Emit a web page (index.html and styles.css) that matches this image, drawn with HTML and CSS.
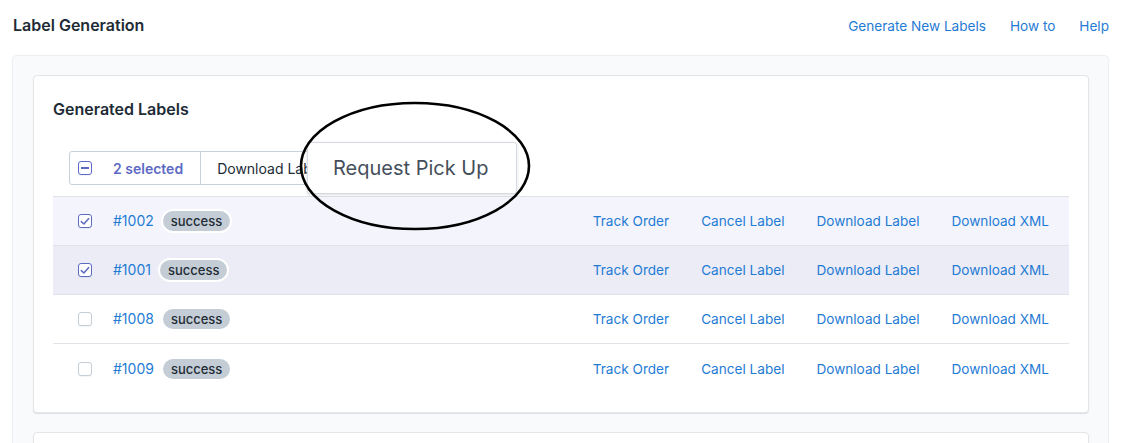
FILE: index.html
```html
<!DOCTYPE html>
<html>
<head>
<meta charset="utf-8">
<link rel="stylesheet" href="styles.css">
</head>
<body>
<header class="top">
  <h1 class="title">Label Generation</h1>
  <nav class="links">
    <a class="link">Generate New Labels</a>
    <a class="link">How to</a>
    <a class="link">Help</a>
  </nav>
</header>
<main class="wrap">
  <section class="card">
    <h2 class="card-title">Generated Labels</h2>
    <div class="bulk-area">
      <div class="bulk">
        <div class="bulk-sel">
          <span class="cb cb-ind"><span class="dash"></span></span>
          <span class="sel-text">2 selected</span>
        </div>
        <div class="bulk-btn">Download Labels</div>
      </div>
      <div class="popover">Request Pick Up</div>
      <svg class="circle" width="236" height="134" viewBox="0 0 236 134">
        <ellipse cx="118" cy="67" rx="114" ry="63" fill="none" stroke="#000" stroke-width="2.6"/>
      </svg>
    </div>
    <div class="rows">
      <div class="row row-sel">
        <span class="cb cb-on"><svg width="10" height="9" viewBox="0 0 10 9"><path d="M1.3 4.6 L3.9 7 L8.7 1.6" fill="none" stroke="#5c6ac4" stroke-width="1.5" stroke-linecap="round" stroke-linejoin="round"/></svg></span>
        <a class="link order">#1002</a>
        <span class="badge">success</span>
        <div class="actions"><a class="link">Track Order</a><a class="link">Cancel Label</a><a class="link">Download Label</a><a class="link">Download XML</a></div>
      </div>
      <div class="row row-hover">
        <span class="cb cb-on"><svg width="10" height="9" viewBox="0 0 10 9"><path d="M1.3 4.6 L3.9 7 L8.7 1.6" fill="none" stroke="#5c6ac4" stroke-width="1.5" stroke-linecap="round" stroke-linejoin="round"/></svg></span>
        <a class="link order">#1001</a>
        <span class="badge">success</span>
        <div class="actions"><a class="link">Track Order</a><a class="link">Cancel Label</a><a class="link">Download Label</a><a class="link">Download XML</a></div>
      </div>
      <div class="row">
        <span class="cb"></span>
        <a class="link order">#1008</a>
        <span class="badge">success</span>
        <div class="actions"><a class="link">Track Order</a><a class="link">Cancel Label</a><a class="link">Download Label</a><a class="link">Download XML</a></div>
      </div>
      <div class="row row-last">
        <span class="cb"></span>
        <a class="link order">#1009</a>
        <span class="badge">success</span>
        <div class="actions"><a class="link">Track Order</a><a class="link">Cancel Label</a><a class="link">Download Label</a><a class="link">Download XML</a></div>
      </div>
    </div>
  </section>
  <section class="card card-next"></section>
</main>
</body>
</html>
```
FILE: styles.css
```css
* { box-sizing: border-box; }
html, body { margin: 0; padding: 0; background: #fff; overflow: hidden; }
body {
  font-family: Inter, "Noto Sans", "Liberation Sans", sans-serif;
  color: #212b36;
  font-size: 14px;
  width: 1129px;
  height: 443px;
}
.top {
  display: flex;
  justify-content: space-between;
  align-items: center;
  padding: 15px 20px 20px 13px;
  height: 55px;
}
.title {
  margin: 0;
  font-size: 16px;
  font-weight: 600;
  line-height: 20px;
  color: #212b36;
}
.links { display: flex; gap: 24px; padding-top: 1px; }
.link {
  color: #1f7bd4;
  text-decoration: none;
  font-size: 14px;
  line-height: 20px;
  cursor: pointer;
}
.links .link, .actions .link { font-size: 13.6px; }
.wrap {
  margin: 0 20px 0 12px;
  background: #f9fafb;
  border: 1px solid #eceef1;
  border-bottom: none;
  border-radius: 5px 5px 0 0;
  padding: 19px 19px 0 20px;
  display: flex;
  flex-direction: column;
  gap: 19px;
}
.card {
  background: #fff;
  border: 1px solid #e3e5e8;
  border-radius: 4px;
  box-shadow: 0 1px 1px rgba(33, 43, 54, 0.12);
  padding: 20px 19px 19px 19px;
}
.card-next { height: 60px; }
.card-title {
  margin: 0;
  font-size: 16px;
  font-weight: 600;
  line-height: 24px;
  padding-top: 1px;
  color: #212b36;
}
.bulk-area {
  position: relative;
  margin-top: 30px;
  padding: 0 0 11px 16px;
}
.bulk {
  display: inline-flex;
  height: 34px;
  border: 1px solid #c9d1d9;
  border-radius: 3px;
  background: #fff;
}
.bulk-sel {
  display: flex;
  align-items: center;
  padding: 0 17px 0 8px;
  border-right: 1px solid #c9d1d9;
  gap: 21px;
}
.sel-text {
  color: #5c6ac4;
  font-weight: 600;
  font-size: 14px;
}
.bulk-btn {
  display: flex;
  align-items: center;
  padding: 0 17px 0 16px;
  color: #212b36;
  font-size: 14px;
}
.popover {
  position: absolute;
  left: 254px;
  top: -9px;
  width: 210px;
  height: 52px;
  background: #fff;
  border: 1px solid #d5dbe1;
  border-radius: 3px;
  box-shadow: 0 1px 3px rgba(33, 43, 54, 0.15);
  color: #454f5b;
  font-size: 20px;
  line-height: 50px;
  padding-left: 25px;
  z-index: 2;
}
.circle {
  position: absolute;
  left: 244px;
  top: -52px;
  z-index: 3;
}
.cb {
  width: 14px;
  height: 14px;
  border: 1px solid #c4cdd5;
  border-radius: 3px;
  background: #fff;
  box-shadow: 0 1px 1px rgba(33, 43, 54, 0.06);
  display: inline-flex;
  align-items: center;
  justify-content: center;
  flex: none;
}
.cb-ind, .cb-on { border: 1.5px solid #5c6ac4; background: #fff; }
.dash { width: 8px; height: 1.5px; background: #5c6ac4; }
.rows { border-top: 1px solid #dfe3e8; }
.row {
  display: flex;
  align-items: center;
  height: 49px;
  padding: 0 20px 0 25px;
  border-bottom: 1px solid #dfe3e8;
}
.row-last { border-bottom: none; }
.row-sel { background: #f4f5fc; }
.row-hover { background: #ebecf6; }
.order { margin-left: 21px; }
.badge {
  margin-left: 7px;
  background: #c4cdd5;
  border: 2px solid #fff;
  border-radius: 12px;
  padding: 0 8px;
  height: 24px;
  line-height: 20px;
  font-size: 13px;
  color: #212b36;
  font-weight: 500;
}
.actions {
  margin-left: auto;
  display: flex;
  gap: 32px;
}
```
